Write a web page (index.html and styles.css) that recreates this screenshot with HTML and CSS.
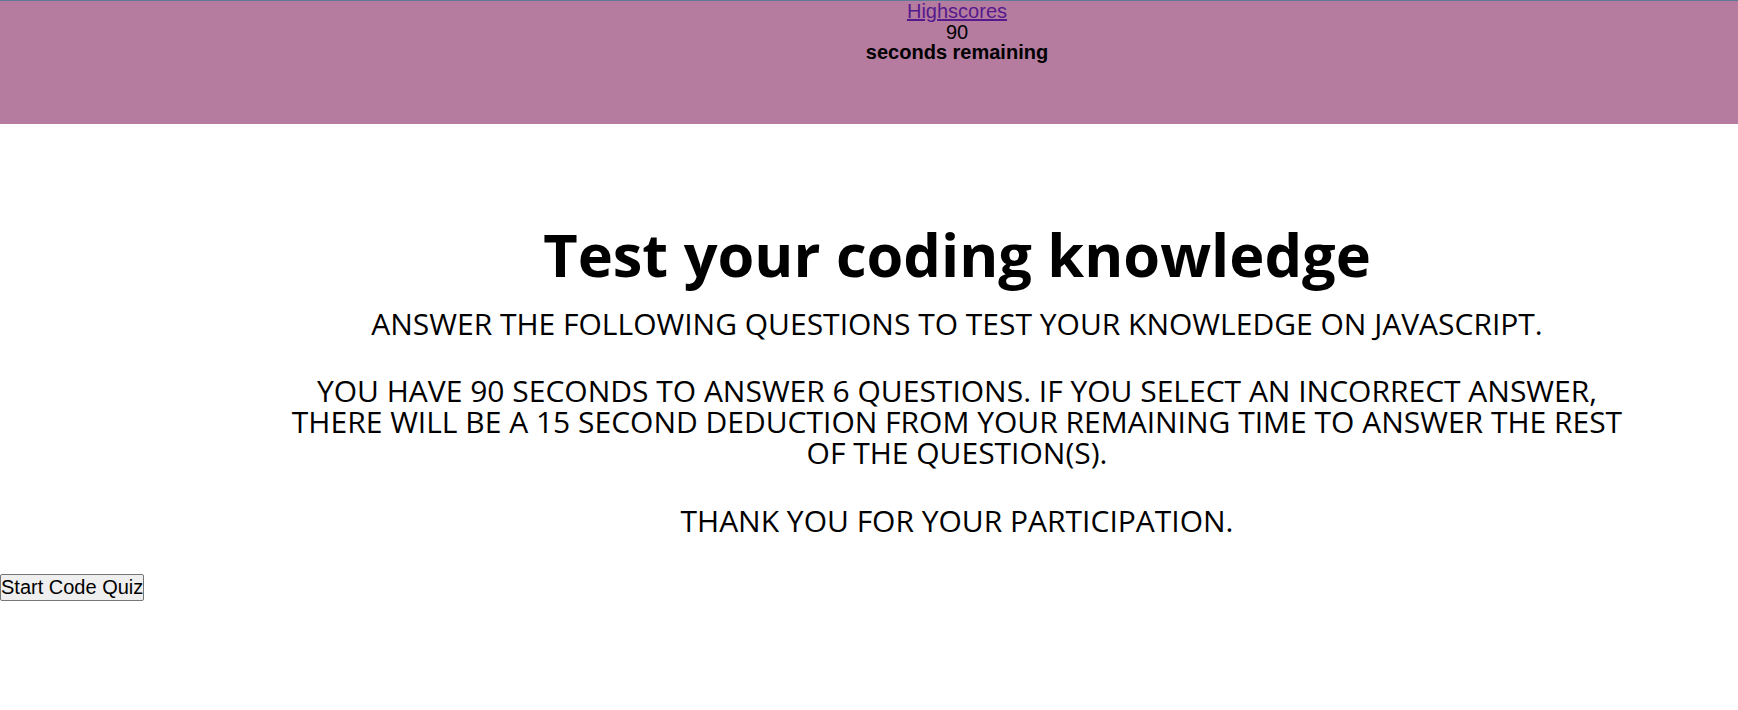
FILE: index.html
```html
<!DOCTYPE html>
<html lang="en">
<head>
<meta charset="utf-8">
<title>Code Quiz</title>
<link rel="stylesheet" href="styles.css">
</head>
<body>
<header class="topbar">
  <a class="hs-link" href="#">Highscores</a>
  <div class="timer-count">90</div>
  <div class="timer-label">seconds remaining</div>
</header>
<main class="intro">
  <h1 class="intro-title">Test your coding knowledge</h1>
  <p class="intro-text intro-lead">Answer the following questions to test your knowledge on JavaScript.</p>
  <p class="intro-text intro-rules">You have 90 seconds to answer 6 questions. If you select an incorrect answer, there will be a 15 second deduction from your remaining time to answer the rest of the question(s).</p>
  <p class="intro-text intro-thanks">Thank you for your participation.</p>
</main>
<button class="start-btn" type="button">Start Code Quiz</button>
</body>
</html>
```
FILE: styles.css
```css
html, body {
  margin: 0;
  padding: 0;
  background: #ffffff;
}

body {
  font-family: "Liberation Sans", Arial, sans-serif;
  color: #000;
}

.topbar {
  box-sizing: border-box;
  height: 124px;
  background: #b57ca0;
  border-top: 1px solid #5f7a96;
  padding-left: 176px;
  text-align: center;
  font-size: 20px;
  line-height: 20.5px;
}

.hs-link {
  color: #551a8b;
  text-decoration: underline;
}

.timer-label {
  font-weight: bold;
}

.intro {
  margin-left: 176px;
  padding-top: 95px;
  text-align: center;
  font-family: "Open Sans", "Noto Sans", sans-serif;
}

.intro-title {
  margin: 0;
  font-size: 59.5px;
  line-height: 70px;
  font-weight: 700;
}

.intro-text {
  width: 1355px;
  margin: 36px auto 0;
  font-size: 30px;
  line-height: 31px;
  text-transform: uppercase;
}

.intro-lead {
  margin-top: 19px;
}

.intro-thanks {
  margin-top: 37px;
  margin-bottom: 0;
}

.start-btn {
  display: block;
  margin: 38px 0 0;
  padding: 1px 0;
  font-family: "Liberation Sans", Arial, sans-serif;
  font-size: 20px;
  line-height: 23px;
  color: #000;
  background: #efefef;
  border: 1px solid #767676;
  border-radius: 2px;
}
```
